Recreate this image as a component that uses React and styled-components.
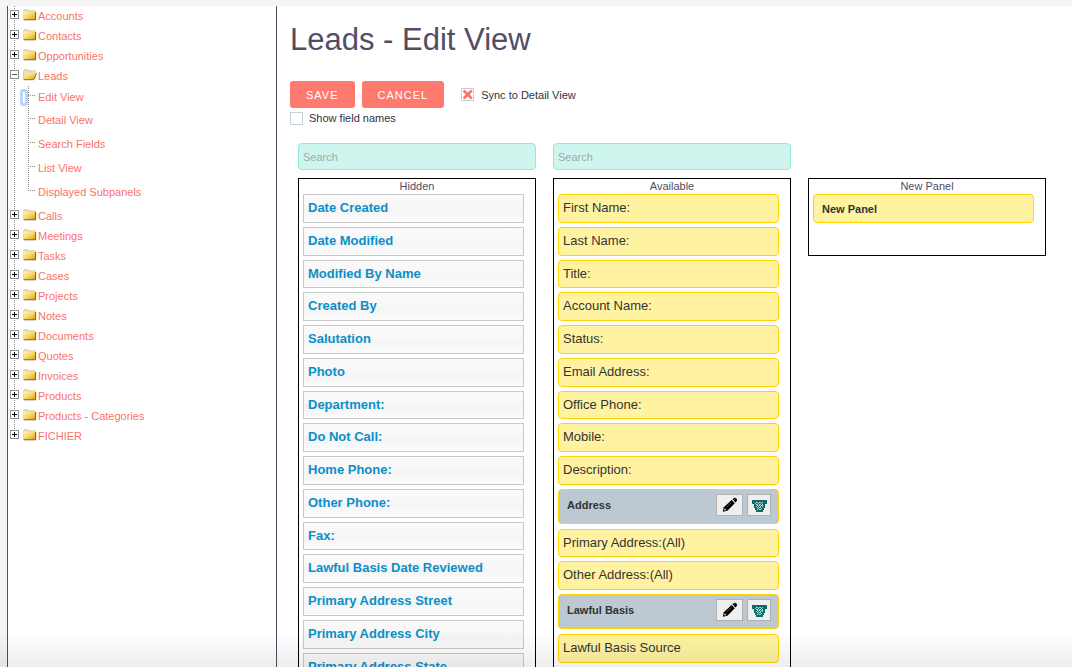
import React from 'react'
import styled, { createGlobalStyle } from 'styled-components'

const modulesBefore = ['Accounts', 'Contacts', 'Opportunities']
const leadsViews = ['Edit View', 'Detail View', 'Search Fields', 'List View', 'Displayed Subpanels']
const modulesAfter = [
  'Calls', 'Meetings', 'Tasks', 'Cases', 'Projects', 'Notes', 'Documents',
  'Quotes', 'Invoices', 'Products', 'Products - Categories', 'FICHIER',
]

const hiddenFields = [
  'Date Created', 'Date Modified', 'Modified By Name', 'Created By', 'Salutation',
  'Photo', 'Department:', 'Do Not Call:', 'Home Phone:', 'Other Phone:', 'Fax:',
  'Lawful Basis Date Reviewed', 'Primary Address Street', 'Primary Address City',
  'Primary Address State',
]

const availableFields = [
  { label: 'First Name:' },
  { label: 'Last Name:' },
  { label: 'Title:' },
  { label: 'Account Name:' },
  { label: 'Status:' },
  { label: 'Email Address:' },
  { label: 'Office Phone:' },
  { label: 'Mobile:' },
  { label: 'Description:' },
  { label: 'Address', panel: true },
  { label: 'Primary Address:(All)' },
  { label: 'Other Address:(All)' },
  { label: 'Lawful Basis', panel: true },
  { label: 'Lawful Basis Source' },
]

function ToggleIcon({ open }) {
  return (
    <svg width="9" height="9" viewBox="0 0 9 9" shapeRendering="crispEdges" aria-hidden="true">
      <rect x="0.5" y="0.5" width="8" height="8" fill="#fff" stroke="#8f8f8f" />
      <path d="M2 4h5v1h-5z" fill={open ? '#555' : '#000'} />
      {!open && <path d="M4 2h1v5h-1z" fill="#000" />}
    </svg>
  )
}

function FolderIcon({ open }) {
  return (
    <svg width="14" height="12" viewBox="0 0 14 12" aria-hidden="true">
      <defs>
        <linearGradient id="folder" x1="0" y1="0" x2="1" y2="1">
          <stop offset="0" stopColor="#fff6b4" />
          <stop offset="0.5" stopColor="#f6d868" />
          <stop offset="1" stopColor="#e39500" />
        </linearGradient>
      </defs>
      <path d="M0.5 10V2L1.6 0.5H5L6.2 1.8H12.2V10z" fill="#e9e0b0" stroke="#cfc698" strokeWidth="0.7" />
      {open ? (
        <>
          <path d="M3.2 4H13.6L10.6 10.4H0.6z" fill="url(#folder)" />
          <path d="M0.6 10.7H10.6L13.6 4.2" fill="none" stroke="#7a6230" strokeWidth="0.9" />
        </>
      ) : (
        <>
          <path d="M0.5 2.8H12.4V10.5H0.5z" fill="url(#folder)" />
          <path d="M0.7 10.8H12.6V3" fill="none" stroke="#5f5030" strokeWidth="0.9" />
        </>
      )}
    </svg>
  )
}

function PencilIcon() {
  return (
    <svg width="16" height="16" viewBox="0 0 16 16" aria-hidden="true">
      <path d="M0.8 14.8L1.8 10.2L9.6 3L12.8 6.2L5.4 13.8z" fill="#000" />
      <path d="M10.4 2.3L12 0.9Q13.2 0.3 14.4 1.5Q15.5 2.7 14.8 4L13.5 5.4z" fill="#000" />
      <path d="M2.7 11.2L4.6 13.1L2.8 13.6L2.2 13z" fill="#e4e4e4" />
      <path d="M4.6 10L9.4 5.4" stroke="#777" strokeWidth="0.7" />
      <path d="M10 2.6L13.2 5.8" stroke="#bbb" strokeWidth="0.6" />
      <path d="M12 2L13 2.6" stroke="#aaa" strokeWidth="0.7" />
    </svg>
  )
}

function BasketIcon() {
  return (
    <svg width="15" height="13" viewBox="0 0 15 13" shapeRendering="crispEdges" aria-hidden="true">
      <path d="M0 1H15V5H13V9H12V11H11V13H4V11H3V9H2V5H0z" fill="#0d6b68" />
      <path
        d="M4 3h2v1h-2zM7 3h2v1h-2zM10 3h1v1h-1zM3 4h1v1h-1zM6 4h1v1h-1zM9 4h1v1h-1zM4 5h2v1h-2zM7 5h2v1h-2zM10 5h1v1h-1zM5 6h1v1h-1zM7 6h1v1h-1zM9 6h2v1h-2zM4 7h1v1h-1zM6 7h1v1h-1zM8 7h1v1h-1zM10 7h1v1h-1zM5 8h1v1h-1zM7 8h2v1h-2zM6 9h1v1h-1zM9 9h1v1h-1zM5 10h1v1h-1zM7 10h2v1h-2z"
        fill="#b3d3d0"
      />
    </svg>
  )
}

function Module({ name, open, children }) {
  return (
    <li>
      <TreeRow>
        <Toggle aria-label={'Toggle ' + name}>
          <ToggleIcon open={open} />
        </Toggle>
        <Folder>
          <FolderIcon open={open} />
        </Folder>
        <TreeLink href="#">{name}</TreeLink>
      </TreeRow>
      {children}
    </li>
  )
}

function App() {
  return (
    <Page>
      <GlobalStyle />
      <Sidebar>
        <Tree>
          {modulesBefore.map((name) => (
            <Module key={name} name={name} />
          ))}
          <Module name="Leads" open>
            <Views>
              {leadsViews.map((name, i) => (
                <View key={name}>
                  <Marker $focused={i === 0} />
                  <Tick />
                  <TreeLink href="#">{name}</TreeLink>
                </View>
              ))}
            </Views>
          </Module>
          {modulesAfter.map((name) => (
            <Module key={name} name={name} />
          ))}
        </Tree>
      </Sidebar>
      <Main>
        <Title>Leads - Edit View</Title>
        <Actions>
          <Button>SAVE</Button>
          <Button>CANCEL</Button>
          <SyncLabel>
            <Checkbox type="checkbox" defaultChecked />
            Sync to Detail View
          </SyncLabel>
        </Actions>
        <Label>
          <Checkbox type="checkbox" />
          Show field names
        </Label>
        <Columns>
          <Search placeholder="Search" aria-label="Search hidden fields" />
          <Search placeholder="Search" aria-label="Search available fields" />
          <span />
          <Box>
            <BoxTitle>Hidden</BoxTitle>
            <List>
              {hiddenFields.map((label) => (
                <HiddenField key={label}>{label}</HiddenField>
              ))}
            </List>
          </Box>
          <Box>
            <BoxTitle>Available</BoxTitle>
            <List>
              {availableFields.map(({ label, panel }) =>
                panel ? (
                  <Panel key={label}>
                    <PanelName>{label}</PanelName>
                    <IconButton aria-label={'Edit ' + label} $width={27}>
                      <PencilIcon />
                    </IconButton>
                    <IconButton aria-label={'Delete ' + label} $width={24}>
                      <BasketIcon />
                    </IconButton>
                  </Panel>
                ) : (
                  <Field key={label}>{label}</Field>
                )
              )}
            </List>
          </Box>
          <NewBox>
            <BoxTitle>New Panel</BoxTitle>
            <List>
              <NewPanel>New Panel</NewPanel>
            </List>
          </NewBox>
        </Columns>
      </Main>
    </Page>
  )
}

const GlobalStyle = createGlobalStyle`
* {
    box-sizing:border-box;
}
body {
    margin:0;
    background:#f5f5f5;
    color:#534d64;
    font-family:"Liberation Sans", Arial, sans-serif;
    font-size:11px;
}
ul {
    list-style:none;
    margin:0;
    padding:0;
}
button, input {
    font-family:inherit;
}
`

const Page = styled.div`
position:relative;
display:flex;
height:100vh;
padding:6px 0 0 7px;
overflow:hidden;
&:after {
    content:'';
    position:absolute;
    left:0;
    right:0;
    bottom:0;
    height:36px;
    background:linear-gradient(rgba(0,0,0,0), rgba(0,0,0,0.07));
    pointer-events:none;
}
`

const Sidebar = styled.nav`
flex:none;
width:270px;
background:#fff;
border-left:1px solid #534d64;
border-right:1px solid #534d64;
`

const Tree = styled.ul`
background:repeating-linear-gradient(#8a8a8a 0 1px, transparent 1px 2px) 6px 0 / 1px calc(100% - 12px) no-repeat;
`

const TreeRow = styled.div`
display:flex;
align-items:center;
height:20px;
`

const Toggle = styled.button`
display:flex;
margin:0 0 4px 2px;
padding:0;
border:none;
background:none;
`

const Folder = styled.span`
display:flex;
margin:0 1px 3px 4px;
`

const TreeLink = styled.a`
color:#f8736b;
line-height:20px;
text-decoration:none;
`

const Views = styled.ul`
margin-bottom:2px;
background:repeating-linear-gradient(#8a8a8a 0 1px, transparent 1px 2px) 20px 0 / 1px calc(100% - 14px) no-repeat;
`

const View = styled.li`
display:flex;
align-items:center;
height:24px;
&:first-child {
    height:22px;
}
`

const Marker = styled.span`
width:8px;
height:17px;
margin-left:12px;
border:${(props) => (props.$focused ? '3px solid #b5d9fd' : 'none')};
border-radius:3px;
`

const Tick = styled.span`
width:8px;
height:1px;
margin:0 2px 3px 0;
background:repeating-linear-gradient(90deg, #8a8a8a 0 1px, transparent 1px 2px);
`

const Main = styled.main`
flex:1;
min-width:0;
padding:0 13px;
background:#fff;
`

const Title = styled.h1`
margin:0;
padding-top:16px;
height:75px;
font-size:31px;
font-weight:400;
line-height:36px;
`

const Actions = styled.div`
display:flex;
align-items:center;
gap:7px;
`

const Button = styled.button`
height:27px;
padding:0 16px;
border:none;
border-radius:3px;
background:#ff7a6e;
color:#fff;
font-size:11px;
letter-spacing:1px;
`

const Label = styled.label`
display:flex;
align-items:center;
gap:6px;
height:20px;
color:#353043;
`

const SyncLabel = styled(Label)`
gap:7px;
margin-left:10px;
`

const Checkbox = styled.input`
appearance:none;
display:grid;
place-items:center;
width:13px;
height:13px;
margin:0;
border:1px solid #c3d0dc;
background:#fff;
&:checked:before {
    content:'';
    width:11px;
    height:11px;
    background:#fa7468;
    clip-path:polygon(4% 20%, 20% 4%, 50% 32%, 80% 4%, 96% 20%, 68% 50%, 96% 80%, 80% 96%, 50% 68%, 20% 96%, 4% 80%, 32% 50%);
}
`

const Columns = styled.div`
display:grid;
grid-template-columns:repeat(3, 238px);
gap:8px 17px;
padding:15px 0 0 8px;
`

const Search = styled.input`
height:27px;
padding:0 4px;
border:1px solid #8eecd6;
border-radius:4px;
background:#cff6ee;
font-size:11px;
&::placeholder {
    color:#a3a8a6;
}
`

const Box = styled.section`
padding:0 11px 4px 4px;
border:1px solid #000;
`

const NewBox = styled(Box)`
align-self:start;
height:78px;
`

const BoxTitle = styled.h2`
margin:0 -7px 0 0;
font-size:11px;
font-weight:400;
line-height:15px;
text-align:center;
`

const List = styled.ul`
display:flex;
flex-direction:column;
gap:4px;
`

const Field = styled.li`
height:29px;
padding:0 4px;
border:1px solid #ffd400;
border-radius:4px;
background:#fff3a1;
color:#333;
font-size:13px;
line-height:26px;
&:nth-child(4n+3) {
    height:28px;
}
`

const HiddenField = styled(Field)`
border-color:#c8c8c8;
border-radius:0;
background:linear-gradient(#fafafa 0%, #f7f7f7 50%, #f4f4f4 51%, #fbfbfb 100%);
color:#0b8fc9;
font-weight:700;
`

const NewPanel = styled(Field)`
padding:0 8px;
font-size:11px;
font-weight:700;
line-height:28px;
`

const Panel = styled.li`
display:flex;
align-items:flex-start;
gap:4px;
height:35px;
margin-bottom:1px;
padding:4px 7px 4px 8px;
border:1px solid #ffd400;
border-radius:4px;
background:#bcc8d2;
`

const PanelName = styled.span`
flex:1;
color:#333;
font-size:11px;
font-weight:700;
line-height:22px;
`

const IconButton = styled.button`
display:flex;
align-items:center;
justify-content:center;
width:${(props) => props.$width}px;
height:22px;
padding:0;
border:1px solid #b0b0b0;
background:#efefef;
`

export default App
